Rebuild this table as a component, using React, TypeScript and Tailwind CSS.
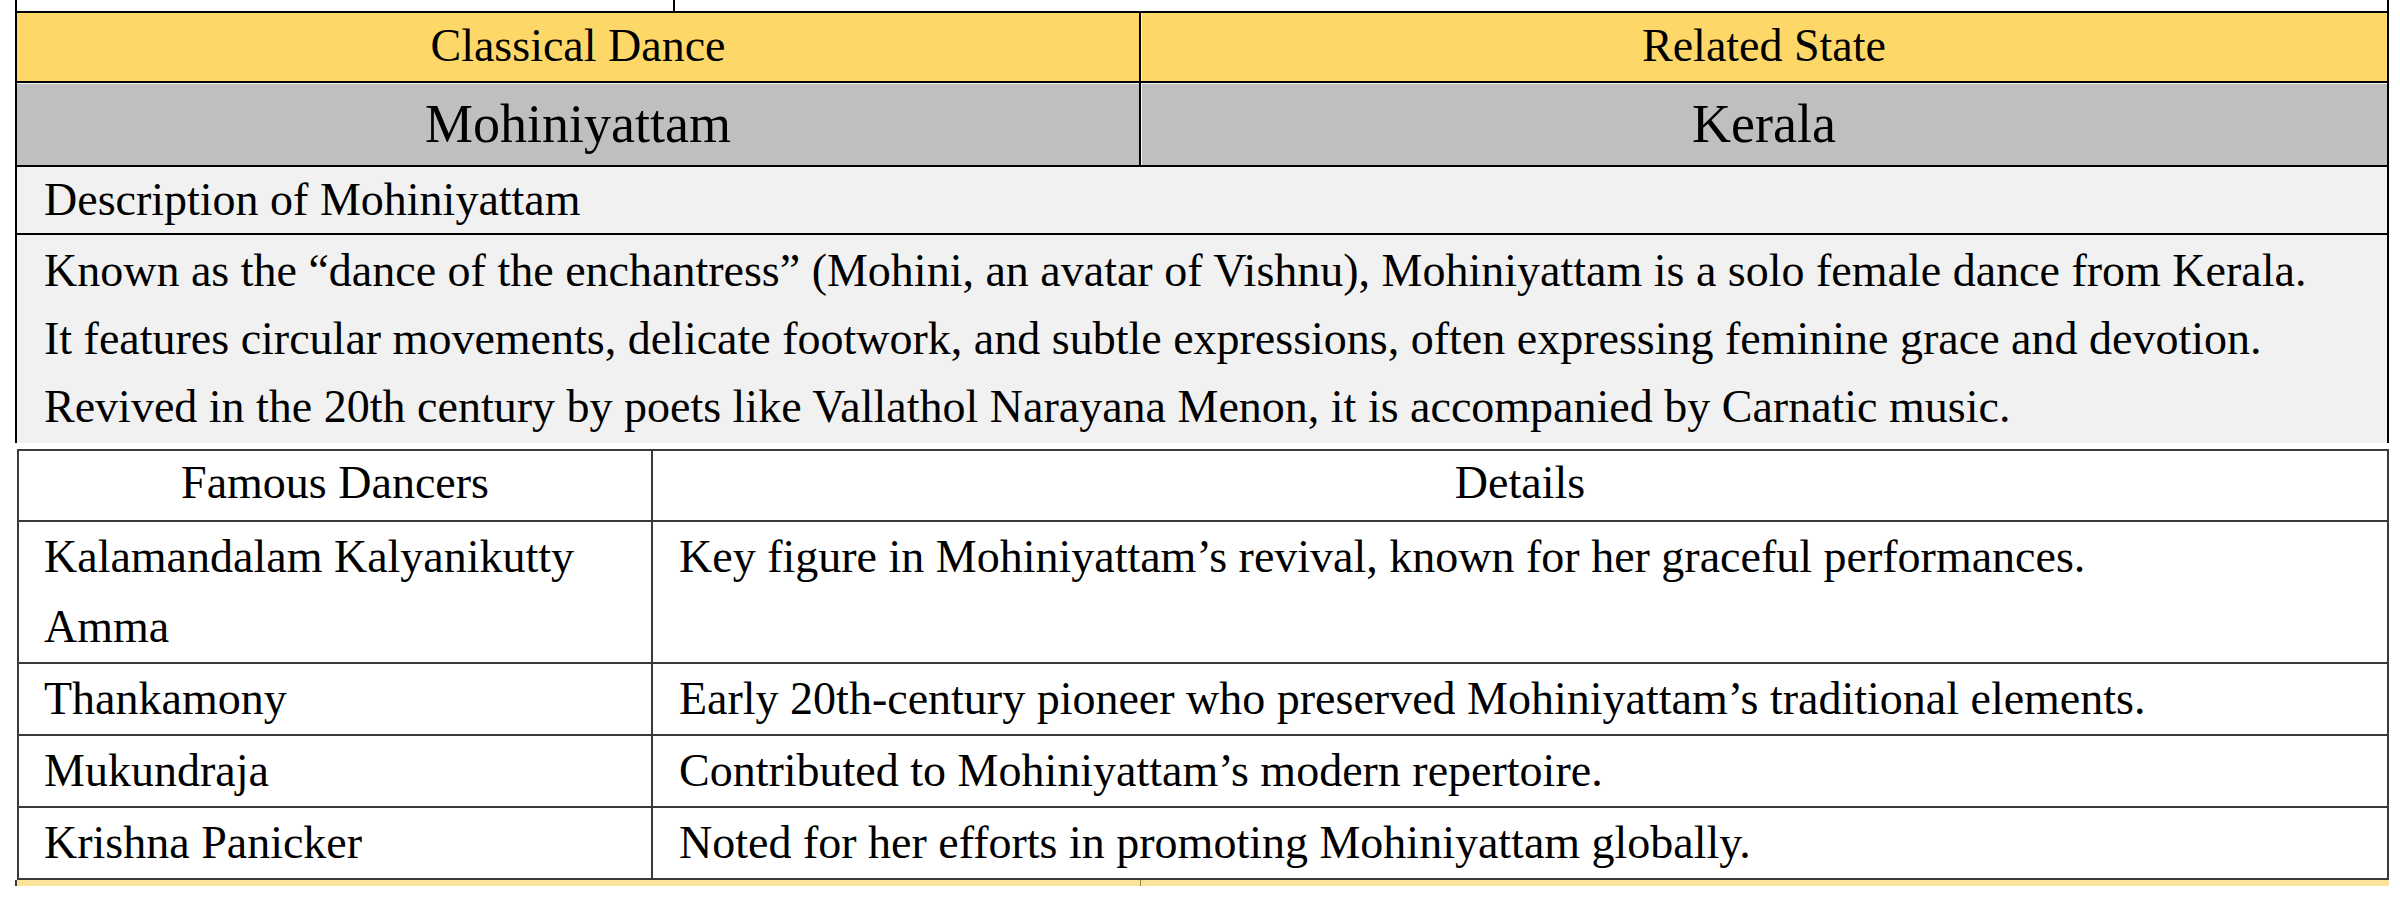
import React from "react";

const dancers: { name: string[]; detail: string }[] = [
  {
    name: ["Kalamandalam Kalyanikutty", "Amma"],
    detail: "Key figure in Mohiniyattam’s revival, known for her graceful performances.",
  },
  {
    name: ["Thankamony"],
    detail: "Early 20th-century pioneer who preserved Mohiniyattam’s traditional elements.",
  },
  { name: ["Mukundraja"], detail: "Contributed to Mohiniyattam’s modern repertoire." },
  { name: ["Krishna Panicker"], detail: "Noted for her efforts in promoting Mohiniyattam globally." },
];

export default function App() {
  return (
    <div className="w-[2400px] h-[898px] overflow-hidden bg-white text-black font-['Liberation_Serif','Times_New_Roman',serif] text-[46px] leading-[69px]">
      {/* tail of previous table */}
      <div className="ml-[15px] w-[2374px] h-[11px] grid grid-cols-[658px_1fr] border-l-2 border-r-2 border-black">
        <div className="border-r-2 border-black" />
        <div />
      </div>

      {/* main table */}
      <div className="ml-[15px] w-[2374px] border-l-2 border-r-2 border-t-2 border-black">
        <div className="grid grid-cols-[1124px_1fr] bg-[#fdd868] border-b-2 border-black">
          <div className="h-[68px] border-r-2 border-black text-center leading-[66px]">Classical Dance</div>
          <div className="h-[68px] text-center leading-[66px] shadow-[inset_1px_0_0_#fff6d8]">Related State</div>
        </div>
        <div className="grid grid-cols-[1124px_1fr] bg-[#bfbfbf] border-b-2 border-black">
          <div className="h-[82px] border-r-2 border-black text-center text-[54px] leading-[82px] shadow-[inset_0_1px_0_#f4f4f4]">
            Mohiniyattam
          </div>
          <div className="h-[82px] text-center text-[54px] leading-[82px] shadow-[inset_1px_1px_0_#f4f4f4]">Kerala</div>
        </div>
        <div className="bg-[#f1f1f1] border-b-2 border-black h-[68px] pl-[27px] leading-[66px]">
          Description of Mohiniyattam
        </div>
        <div className="bg-[#f1f1f1] h-[208px] pl-[27px] leading-[68px] pt-[2px] whitespace-nowrap">
          <div>
            Known as the “dance of the enchantress” (Mohini, an avatar of Vishnu), Mohiniyattam is a solo female dance from Kerala.
          </div>
          <div>
            It features circular movements, delicate footwork, and subtle expressions, often expressing feminine grace and devotion.
          </div>
          <div>
            Revived in the 20th century by poets like Vallathol Narayana Menon, it is accompanied by Carnatic music.
          </div>
        </div>
      </div>

      {/* dancers table */}
      <div className="mt-[6px] ml-[17px] w-[2372px] border-2 border-[#3a3a3a] bg-white">
        <div className="grid grid-cols-[634px_1fr] border-b-2 border-[#3a3a3a]">
          <div className="h-[69px] border-r-2 border-[#3a3a3a] text-center leading-[64px]">Famous Dancers</div>
          <div className="h-[69px] text-center leading-[64px]">Details</div>
        </div>
        {dancers.map((d, i) => (
          <div
            key={i}
            className={
              i < dancers.length - 1
                ? "grid grid-cols-[634px_1fr] border-b-2 border-[#3a3a3a]"
                : "grid grid-cols-[634px_1fr]"
            }
          >
            <div className="border-r-2 border-[#3a3a3a] pl-[25px] leading-[70px] whitespace-nowrap">
              {d.name.map((n, j) => (
                <div key={j}>{n}</div>
              ))}
            </div>
            <div className="pl-[26px] leading-[70px] whitespace-nowrap">{d.detail}</div>
          </div>
        ))}
      </div>

      {/* peek of next table */}
      <div className="ml-[15px] w-[2374px] h-[6px] grid grid-cols-[1124px_1fr] bg-[#fbe49a] border-l-2 border-[#3a3a3a]">
        <div className="border-r border-[#9a8a50]" />
        <div />
      </div>
    </div>
  );
}
